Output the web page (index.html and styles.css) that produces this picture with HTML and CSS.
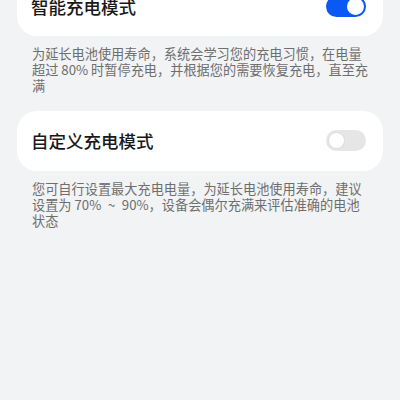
FILE: index.html
```html
<!DOCTYPE html>
<html lang="zh-CN">
<head>
<meta charset="utf-8">
<link rel="stylesheet" href="styles.css">
</head>
<body>
<div class="page">
  <div class="card card-first">
    <span class="title">智能充电模式</span>
    <span class="toggle on"><span class="knob"></span></span>
  </div>
  <p class="desc">为延长电池使用寿命，系统会学习您的充电习惯，在电量超过 80% 时暂停充电，并根据您的需要恢复充电，直至充满</p>
  <div class="card">
    <span class="title">自定义充电模式</span>
    <span class="toggle off"><span class="knob"></span></span>
  </div>
  <p class="desc">您可自行设置最大充电电量，为延长电池使用寿命，建议设置为 70%&ensp;~&ensp;90%，设备会偶尔充满来评估准确的电池状态</p>
</div>
</body>
</html>
```
FILE: styles.css
```css
html, body {
  margin: 0;
  padding: 0;
  background: #f1f3f5;
  height: 100%;
  overflow: hidden;
}
.page {
  font-family: "Noto Sans CJK SC", "Noto Sans", sans-serif;
  display: flex;
  flex-direction: column;
}
.card {
  margin: 0 17px;
  height: 60px;
  background: #ffffff;
  border-radius: 20px;
  display: flex;
  align-items: center;
  justify-content: space-between;
  padding: 0 17px 0 14px;
}
.card-first {
  margin-top: -24px;
}
.title {
  font-size: 17.5px;
  font-weight: 500;
  color: #191919;
}
.toggle {
  width: 40px;
  height: 21px;
  border-radius: 11px;
  display: flex;
  align-items: center;
  padding: 0 2px;
  box-sizing: border-box;
}
.toggle .knob {
  width: 17px;
  height: 17px;
  border-radius: 50%;
  background: #ffffff;
  box-sizing: border-box;
}
.toggle.on {
  background: #0a59f7;
  justify-content: flex-end;
}
.toggle.off {
  background: #e6e6e6;
  justify-content: flex-start;
}
.toggle.off .knob {
  border: 1px solid #dcdcdc;
}
.desc {
  margin: 0 0 16.5px;
  padding: 10px 31px 0 32px;
  font-size: 13.2px;
  line-height: 16px;
  color: #6e6e6e;
  word-break: break-all;
}
```
